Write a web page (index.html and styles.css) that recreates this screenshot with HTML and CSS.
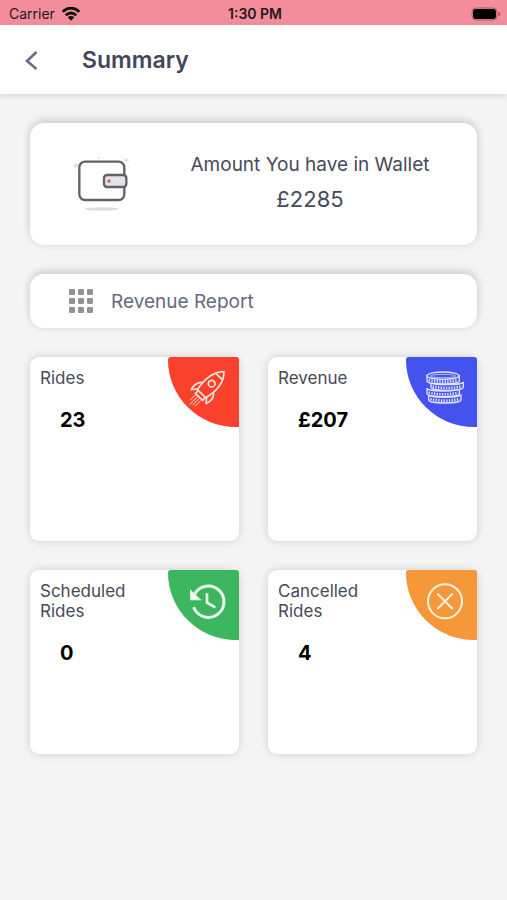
FILE: index.html
```html
<!DOCTYPE html>
<html lang="en">
<head>
<meta charset="utf-8">
<meta name="viewport" content="width=device-width, initial-scale=1">
<title>Summary</title>
<link rel="stylesheet" href="styles.css">
</head>
<body>
<div class="status">
  <div class="carrier">
    <span>Carrier</span>
    <svg width="18" height="14" viewBox="0 0 54 42" fill="none" stroke="#111" stroke-width="8" aria-hidden="true">
      <path d="M2 14Q27-8 52 14"/>
      <path d="M11 25Q27 11 43 25"/>
      <path d="M27 41L17 31Q27 23 37 31Z" fill="#111" stroke="none"/>
    </svg>
  </div>
  <div class="time">1:30 PM</div>
  <svg class="battery" width="30" height="14" viewBox="0 0 30 14" aria-hidden="true">
    <rect x="1" y="1" width="25" height="12" rx="4" fill="none" stroke="#a35f69"/>
    <rect x="2" y="2" width="23" height="10" rx="3" fill="#000"/>
    <path d="M28 5v4q2-2 0-4" fill="#a35f69" stroke="#a35f69"/>
  </svg>
</div>
<header class="header">
  <button class="back" type="button" aria-label="Back">
    <svg width="14" height="20" viewBox="0 0 14 20" fill="none" stroke="#6b6d86" stroke-width="2.600" aria-hidden="true"><path d="M12.500 2L3 11l9.500 8"/></svg>
  </button>
  <h1>Summary</h1>
</header>
<main>
  <section class="panel wallet">
    <svg class="wallet-icon" width="75" height="70" viewBox="0 0 225 210" aria-hidden="true">
      <g fill="#dedede">
        <path d="M31 47l4 5 6 3-6 4-3 6-4-6-6-3 6-3zM184 32l3 5 5 3-5 3-3 5-3-5-5-3 5-3z"/>
        <circle cx="101" cy="32" r="3"/><circle cx="191" cy="58" r="2"/>
        <ellipse cx="110" cy="186" rx="51" ry="5"/>
      </g>
      <rect x="43" y="44" width="135" height="115" rx="17" fill="#fff" stroke="#626262" stroke-width="7"/>
      <rect x="117" y="84" width="67" height="36" rx="9" fill="#e4e3e8" stroke="#626262" stroke-width="7"/>
      <circle cx="132" cy="102" r="5" fill="#da5577"/>
    </svg>
    <div class="amount">
      <p>Amount You have in Wallet</p>
      <p class="sum">£2285</p>
    </div>
  </section>
  <button class="panel report" type="button">
    <svg width="26" height="26" viewBox="0 0 26 26" fill="#939393" aria-hidden="true">
      <g id="dots"><rect x="1" y="1" width="6" height="6" rx="1"/><rect x="10" y="1" width="6" height="6" rx="1"/><rect x="19" y="1" width="6" height="6" rx="1"/></g>
      <use href="#dots" y="9"/><use href="#dots" y="18"/>
    </svg>
    <span>Revenue Report</span>
  </button>
  <div class="grid">
    <section class="card">
      <div class="text"><h2>Rides</h2><p>23</p></div>
      <div class="badge red">
        <svg viewBox="0 0 213 210" fill="none" stroke="#ffe3dc" stroke-width="5" stroke-linejoin="round" stroke-linecap="round" aria-hidden="true">
          <path d="M168 44Q124 44 88 98L113 122Q168 90 168 44Z"/>
          <path d="M143 49L164 69M102 76Q80 76 70 98L89 96M137 108Q137 130 114 140L116 120"/>
          <path d="M90 102L82 109L104 130L111 122"/>
          <circle cx="131" cy="80" r="10"/>
          <path d="M81 115L67 129M87 121L66 142M92 126L75 143M98 131L82 147" stroke-width="3"/>
        </svg>
      </div>
    </section>
    <section class="card">
      <div class="text"><h2>Revenue</h2><p>£207</p></div>
      <div class="badge blue">
        <svg viewBox="0 0 213 210" fill="#4453ee" stroke="#e4e6ff" stroke-width="4" aria-hidden="true">
          <g id="coin">
            <path d="M68 112v17c0 12 97 12 97 0v-17c0 12-97 12-97 0Z"/>
            <path d="M73 126q44 10 88 0" fill="none" stroke-width="8" stroke-dasharray="4 4"/>
          </g>
          <use href="#coin" x="-5" y="-19"/>
          <use href="#coin" x="7" y="-38"/>
          <use href="#coin" x="-5" y="-57"/>
          <ellipse cx="111" cy="56" rx="48" ry="11"/>
          <ellipse cx="111" cy="57" rx="38" ry="5" stroke-width="2"/>
        </svg>
      </div>
    </section>
    <section class="card">
      <div class="text"><h2>Scheduled Rides</h2><p>0</p></div>
      <div class="badge green">
        <svg viewBox="0 0 213 210" fill="none" stroke="#eafff0" stroke-width="9" aria-hidden="true">
          <path d="M80 72A47 47 0 1 1 77 112"/>
          <path d="M66 58L67 91L101 91Z" fill="#eafff0" stroke="none"/>
          <path d="M117 70V98L142 112" stroke-width="8"/>
        </svg>
      </div>
    </section>
    <section class="card">
      <div class="text"><h2>Cancelled Rides</h2><p>4</p></div>
      <div class="badge orange">
        <svg viewBox="0 0 213 210" fill="none" stroke="#fff4e2" stroke-width="6" aria-hidden="true">
          <circle cx="117" cy="94" r="51"/>
          <path d="M94 71L140 117M140 71L94 117"/>
        </svg>
      </div>
    </section>
  </div>
</main>
</body>
</html>
```
FILE: styles.css
```css
* { box-sizing: border-box; }
body {
  margin: 0;
  min-height: 100vh;
  background: #f4f4f4;
  color: #484a58;
  font-family: Inter, "Liberation Sans", sans-serif;
}
h1, h2, p { margin: 0; }
button { border: 0; background: none; padding: 0; font: inherit; color: inherit; }
.status {
  display: grid;
  grid-template-columns: 1fr auto 1fr;
  align-items: center;
  height: 25px;
  padding: 2px 6px 0 9px;
  background: #f38d9b;
  color: #24161a;
  font-size: 14px;
}
.carrier { display: flex; align-items: center; gap: 7px; }
.time { font-weight: 600; }
.battery { justify-self: end; }
.header {
  display: flex;
  align-items: center;
  gap: 42px;
  height: 69px;
  padding: 0 24px;
  background: #fff;
  box-shadow: 0 2px 6px rgba(0, 0, 0, 0.12);
}
.back { display: flex; width: 16px; }
h1 { font-size: 23px; font-weight: 600; color: #43465a; }
main { padding: 29px; display: flex; flex-direction: column; gap: 29px; }
.panel {
  display: flex;
  align-items: center;
  margin: 0 1px;
  border-radius: 14px;
  background: #fff;
  box-shadow: 0 -2px 8px rgba(0, 0, 0, 0.2);
}
.wallet { min-height: 122px; padding: 0 35px 4px; }
.wallet-icon { flex: none; }
.amount { flex: 1; padding-left: 38px; text-align: center; font-size: 19px; line-height: 26px; white-space: nowrap; }
.amount .sum { margin-top: 8px; font-size: 22px; }
.report { min-height: 54px; padding: 0 38px; gap: 17px; font-size: 19px; color: #666980; }
.grid { display: grid; grid-template-columns: 1fr 1fr; gap: 29px; margin: 0 1px; }
.card {
  display: flex;
  justify-content: space-between;
  align-items: flex-start;
  min-height: 184px;
  border-radius: 9px;
  background: #fff;
  box-shadow: 0 0 8px rgba(0, 0, 0, 0.16);
}
.text { padding: 11px 0 0 10px; }
h2 { font-size: 17px; font-weight: 400; line-height: 20px; }
.text p { margin: 20px 0 0 20px; font-size: 20px; font-weight: 700; line-height: 24px; color: #000; }
.badge { flex: none; width: 71px; height: 70px; border-radius: 3px 3px 0 100%; overflow: hidden; }
.badge svg { display: block; width: 100%; height: 100%; }
.red { background: #fa412b; }
.blue { background: #4453ee; }
.green { background: #3cb760; }
.orange { background: #f6973a; }
```
